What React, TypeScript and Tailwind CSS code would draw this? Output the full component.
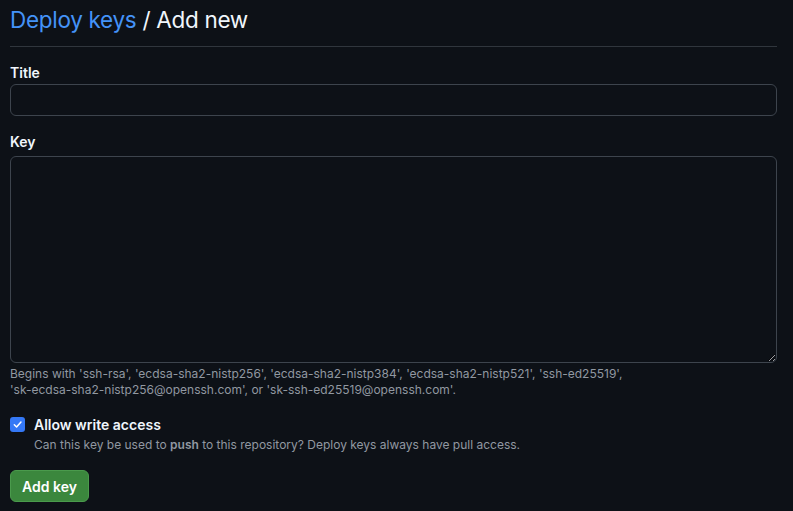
import React, { useState } from "react";

const App = () => {
  const [title, setTitle] = useState("");
  const [key, setKey] = useState("");
  const [writeAccess, setWriteAccess] = useState(true);

  return (
    <div className="min-h-[511px] w-full bg-[#0d1117] px-[10px] font-['Inter','Liberation_Sans',sans-serif] text-[#f0f6fc] [color-scheme:dark]">
      <div className="flex w-[767px] flex-col">
        <h2 className="border-b border-[#30363d] pt-[5px] pb-[11px] text-[22.5px] leading-[30px] font-normal tracking-[-0.3px]">
          <a href="#" className="text-[#4493f8]">
            Deploy keys
          </a>{" "}
          / Add new
        </h2>

        <label className="mt-[16px] mb-[1px] text-[14px] leading-[20px] font-semibold">
          Title
        </label>
        <input
          value={title}
          onChange={(e) => setTitle(e.target.value)}
          className="h-[32px] w-full rounded-[6px] border border-[#3d444d] bg-[#0d1117] px-3 text-[14px] outline-none"
        />

        <label className="mt-[16px] mb-[4px] text-[14px] leading-[20px] font-semibold">
          Key
        </label>
        <textarea
          value={key}
          onChange={(e) => setKey(e.target.value)}
          className="h-[207px] w-full resize-y rounded-[6px] border border-[#3d444d] bg-[#0d1117] px-3 py-2 text-[14px] outline-none"
        />
        <p className="mt-[3px] text-[12px] leading-[16px] text-[#9198a1]">
          Begins with 'ssh-rsa', 'ecdsa-sha2-nistp256', 'ecdsa-sha2-nistp384',
          'ecdsa-sha2-nistp521', 'ssh-ed25519',
          <br />
          'sk-ecdsa-sha2-nistp256@openssh.com', or 'sk-ssh-ed25519@openssh.com'.
        </p>

        <div className="mt-[17px] flex items-start gap-[9px]">
          <button
            onClick={() => setWriteAccess(!writeAccess)}
            className={`mt-[2px] flex h-[15px] w-[15px] items-center justify-center rounded-[3px] ${
              writeAccess ? "bg-[#3478f6]" : "border border-[#3d444d]"
            }`}
          >
            {writeAccess && (
              <svg width="11" height="11" viewBox="0 0 12 12" fill="none">
                <path
                  d="M2.5 6.3 L5 8.8 L9.8 3.2"
                  stroke="white"
                  strokeWidth="1.6"
                  strokeLinecap="round"
                  strokeLinejoin="round"
                />
              </svg>
            )}
          </button>
          <div className="flex flex-col">
            <span className="text-[14px] leading-[20px] font-semibold">
              Allow write access
            </span>
            <span className="mt-[1px] text-[12px] leading-[18px] text-[#9198a1]">
              Can this key be used to{" "}
              <strong className="font-semibold">push</strong> to this
              repository? Deploy keys always have pull access.
            </span>
          </div>
        </div>

        <div className="mt-[16px]">
          <button className="h-[32px] w-[79px] rounded-[6px] border border-[#4a9a4c] bg-[#3b873d] text-[14px] font-semibold text-white">
            Add key
          </button>
        </div>
      </div>
    </div>
  );
};

export default App;
